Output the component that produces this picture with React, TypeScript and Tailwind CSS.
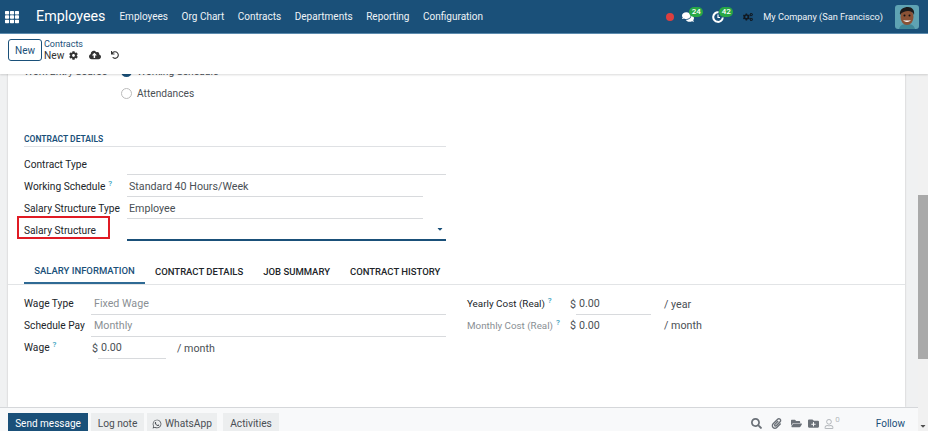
import { FaCog, FaCloudUploadAlt, FaUndo, FaComments, FaCogs, FaSearch, FaPaperclip, FaFolderOpen, FaFolderPlus, FaWhatsapp, FaRegUser, FaCaretDown, FaTh } from 'react-icons/fa'

const navItems = ['Employees', 'Org Chart', 'Contracts', 'Departments', 'Reporting', 'Configuration']
const tabs = ['CONTRACT DETAILS', 'JOB SUMMARY', 'CONTRACT HISTORY']

function Help() {
  return <sup className="ml-[3px] text-[8px] font-medium text-[#3b9fc0]">?</sup>
}

function Avatar() {
  return (
    <svg width="24" height="24" viewBox="0 0 24 24" className="rounded-[3px]">
      <rect width="24" height="24" fill="#5fa3b3" />
      <path d="M4 24c1-4 4-5 8-5s7 1 8 5z" fill="#3f8798" />
      <ellipse cx="12" cy="12" rx="6.500" ry="8" fill="#8a5236" />
      <path d="M5 10c-1-6 4-8 8-8 4 0 7 3 6 8-1-3-3-4-6-4-3 0-6 1-8 4z" fill="#1c1a1a" />
      <circle cx="9.500" cy="10.500" r="1" fill="#111" />
      <circle cx="14.500" cy="10.500" r="1" fill="#111" />
      <path d="M8 15c2 2.500 6 2.500 8 0-2 .7-6 .7-8 0z" fill="#fff" />
    </svg>
  )
}

function ClockIcon() {
  return (
    <svg width="12" height="12" viewBox="0 0 12 12" fill="none" stroke="#fff" className="block">
      <path d="M6.500 1.300A4.800 4.800 0 1 0 10.800 6.500" strokeWidth="2" />
      <path d="M6 3.500V6.500H8" strokeWidth="1.200" />
    </svg>
  )
}

function Badge({ n }: { n: number }) {
  return (
    <span className="absolute -top-[4px] left-[7px] flex h-[10px] w-[14px] items-center justify-center rounded-full bg-[#28a745] text-[8px] leading-none font-medium text-white">
      {n}
    </span>
  )
}

function Row({ label, value, short, help }: { label: string; value?: string; short?: boolean; help?: boolean }) {
  return (
    <div className="grid h-[22px] grid-cols-[103px_1fr] items-center">
      <span className="pt-[2px] text-[#212529]">
        {label}
        {help && <Help />}
      </span>
      <div className={`flex h-full items-center border-b border-[#d8dadd] pt-[4px] pl-[2px] text-[10.7px] text-[#4a4f55] ${short ? 'w-[296px]' : ''}`}>
        {value}
      </div>
    </div>
  )
}

export default function App() {
  return (
    <div className="flex h-[431px] w-[928px] flex-col overflow-hidden bg-white font-['Roboto',sans-serif] text-[10.2px] text-[#4a4f55]">
      <header className="flex h-[34px] shrink-0 items-center border-b border-[#5d8db0] bg-[#1a5079] text-white">
        <FaTh size={14} className="ml-[5px]" />
        <span className="ml-[17px] text-[14.3px]">Employees</span>
        <nav className="ml-[14px] flex gap-[13.6px] text-[10px] text-[#eef3f7]">
          {navItems.map((item) => (
            <span key={item}>{item}</span>
          ))}
        </nav>
        <div className="ml-auto flex items-center">
          <span className="h-[8px] w-[8px] rounded-full bg-[#dc3f3f]" />
          <span className="relative ml-[8px] w-[30px]">
            <FaComments size={12} />
            <Badge n={24} />
          </span>
          <span className="relative w-[31px]">
            <ClockIcon />
            <Badge n={42} />
          </span>
          <FaCogs size={10} className="text-[#101820]" />
          <span className="ml-[10px] text-[9.2px] text-[#eef3f7]">My Company (San Francisco)</span>
          <span className="mr-[9px] ml-[12px] flex">
            <Avatar />
          </span>
        </div>
      </header>

      <div className="z-10 flex h-[40px] shrink-0 items-center bg-white pb-[8px] pl-[8px] shadow-[0_1px_2px_rgba(0,0,0,0.15)]">
        <button className="h-[22px] w-[34px] rounded-[3px] border border-[#1a5079] text-[10px] text-[#1a5079]">New</button>
        <div className="ml-[2px]">
          <div className="text-[9px] leading-[10px] text-[#1a5079]">Contracts</div>
          <div className="flex items-center leading-[13px] text-[#333]">
            New
            <FaCog size={9} className="ml-[5px]" />
            <FaCloudUploadAlt size={12} className="ml-[11px]" />
            <FaUndo size={8} className="ml-[10px]" />
          </div>
        </div>
      </div>

      <div className="flex min-h-0 flex-1">
        <div className="flex min-w-0 flex-1 flex-col">
          <div className="flex min-h-0 flex-1 overflow-hidden bg-[#f0f1f2] pr-[13px] pl-[8px]">
            <div className="-mt-[13px] flex-1 bg-white shadow-[0_0_2px_rgba(0,0,0,0.2)]">
              <div className="ml-[16px] w-[422px]">
                <div className="grid h-[22px] grid-cols-[97px_1fr] items-center">
                  <span>Work Entry Source</span>
                  <span className="flex items-center gap-[5px]">
                    <span className="h-[11px] w-[11px] rounded-full border-[3px] border-[#1a5079]" />
                    Working Schedule
                  </span>
                </div>
                <div className="grid h-[22px] grid-cols-[97px_1fr] items-center">
                  <span />
                  <span className="flex items-center gap-[5px]">
                    <span className="h-[11px] w-[11px] rounded-full border border-[#bbb]" />
                    Attendances
                  </span>
                </div>

                <div className="mt-[27px] flex h-[15px] items-center border-b border-[#dfe1e4] text-[8.5px] font-semibold text-[#1a5079]">
                  CONTRACT DETAILS
                </div>
                <div className="mt-[6px]">
                  <Row label="Contract Type" />
                  <Row label="Working Schedule" value="Standard 40 Hours/Week" short help />
                  <Row label="Salary Structure Type" value="Employee" short />
                  <div className="grid h-[22px] grid-cols-[103px_1fr] items-center">
                    <span className="relative pt-[2px] text-[#212529]">
                      Salary Structure
                      <span className="absolute -top-[5px] -left-[7px] h-[23px] w-[93px] border-2 border-[#e01b24]" />
                    </span>
                    <div className="flex h-full items-center justify-end border-b-2 border-[#1a5079] pr-[2px] text-[#1a5079]">
                      <FaCaretDown size={8} />
                    </div>
                  </div>
                </div>
              </div>

              <div className="mt-[17px] flex h-[27px] border-b border-[#e2e4e6] pl-[16px] text-[9.500px] font-medium text-[#212529]">
                <span className="flex w-[121px] items-center justify-center border-b-2 border-[#2f6a94] pt-[2px] text-[#1a5079]">
                  SALARY INFORMATION
                </span>
                {tabs.map((tab) => (
                  <span key={tab} className="flex items-center px-[10px] pt-[2px]">
                    {tab}
                  </span>
                ))}
              </div>

              <div className="mt-[8px] flex pl-[16px]">
                <div className="w-[422px]">
                  <div className="grid h-[22px] grid-cols-[67px_1fr] items-center">
                    <span className="text-[#212529]">Wage Type</span>
                    <span className="flex h-full items-center border-b border-[#d8dadd] pt-[2px] pl-[3px] text-[10.7px] text-[#8a8f94]">Fixed Wage</span>
                  </div>
                  <div className="grid h-[22px] grid-cols-[67px_1fr] items-center">
                    <span className="text-[#212529]">Schedule Pay</span>
                    <span className="flex h-full items-center border-b border-[#d8dadd] pt-[2px] pl-[3px] text-[10.7px] text-[#8a8f94]">Monthly</span>
                  </div>
                  <div className="grid h-[22px] grid-cols-[67px_1fr] items-center">
                    <span className="text-[#212529]">
                      Wage
                      <Help />
                    </span>
                    <span className="flex h-full items-center text-[10.7px]">
                      <span className="w-[7px] pt-[2px] pl-[1px]">$</span>
                      <span className="flex h-full w-[68px] items-center border-b border-[#d8dadd] pt-[2px] pl-[3px]">0.00</span>
                      <span className="ml-[11px] pt-[2px]">/ month</span>
                    </span>
                  </div>
                </div>
                <div className="ml-[21px] w-[300px]">
                  <div className="grid h-[22px] grid-cols-[103px_6px_75px_1fr] items-center">
                    <span className="text-[9.9px] text-[#212529]">
                      Yearly Cost (Real)
                      <Help />
                    </span>
                    <span className="pt-[2px] text-[10.7px]">$</span>
                    <span className="flex h-full items-center border-b border-[#d8dadd] pt-[2px] pl-[3px] text-[10.7px]">0.00</span>
                    <span className="ml-[13px] pt-[2px] text-[10.7px]">/ year</span>
                  </div>
                  <div className="grid h-[22px] grid-cols-[103px_6px_75px_1fr] items-center">
                    <span className="text-[9.8px] text-[#8a8f94]">
                      Monthly Cost (Real)
                      <Help />
                    </span>
                    <span className="text-[10.7px]">$</span>
                    <span className="pl-[3px] text-[10.7px]">0.00</span>
                    <span className="ml-[13px] text-[10.7px]">/ month</span>
                  </div>
                </div>
              </div>
            </div>
          </div>

          <footer className="flex h-[24px] shrink-0 items-end border-t border-[#d5d7da] bg-[#f8f9fa] pr-[13px] pl-[8px]">
            <button className="h-[18px] w-[80px] bg-[#1a5079] pt-[3px] text-[10px] text-white">Send message</button>
            <button className="ml-[3px] h-[18px] w-[53px] bg-[#eceeef] pt-[3px]">Log note</button>
            <button className="ml-[3px] flex h-[18px] w-[70px] items-center justify-center gap-[3px] bg-[#eceeef] pt-[3px]">
              <FaWhatsapp size={10} />
              WhatsApp
            </button>
            <button className="ml-[6px] h-[18px] w-[56px] bg-[#eceeef] pt-[3px]">Activities</button>
            <div className="ml-auto flex h-[18px] items-center pt-[3px] text-[#6b7178]">
              <FaSearch size={11} />
              <FaPaperclip size={11} className="ml-[9px]" />
              <FaFolderOpen size={11} className="ml-[9px]" />
              <FaFolderPlus size={11} className="ml-[6px]" />
              <FaRegUser size={10} className="ml-[5px] text-[#b5b9bd]" />
              <sup className="ml-[1px] text-[8px] text-[#b5b9bd]">0</sup>
              <span className="ml-[36px] text-[10px] text-[#1a5079]">Follow</span>
            </div>
          </footer>
        </div>

        <div className="flex w-[10px] shrink-0 flex-col bg-[#f1f1f1]">
          <div className="mt-[121px] h-[164px] bg-[#a9a9a9]" />
          <div className="mt-auto mb-[1px] flex justify-center text-[#505050]">
            <FaCaretDown size={8} />
          </div>
        </div>
      </div>
    </div>
  )
}
